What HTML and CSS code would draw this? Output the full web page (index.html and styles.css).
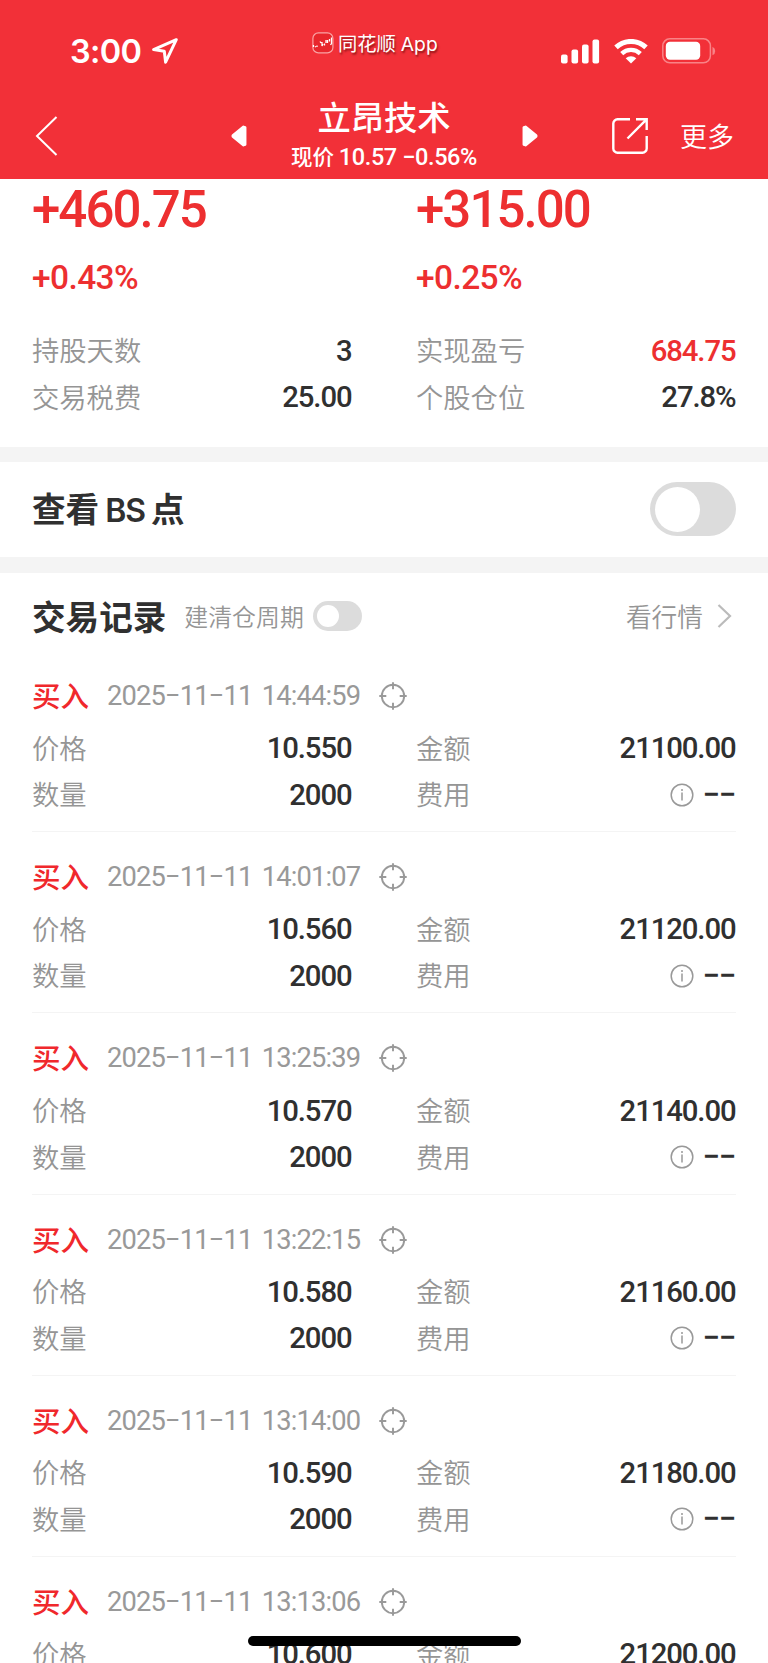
FILE: index.html
```html
<!DOCTYPE html>
<html lang="zh-CN">
<head>
<meta charset="utf-8">
<title>立昂技术</title>
<link rel="stylesheet" href="styles.css">
</head>
<body>
<svg width="0" height="0" class="defs">
  <symbol id="target" viewBox="0 0 28 28"><g fill="none" stroke="#999" stroke-width="1.900"><circle cx="14" cy="14" r="11.2"/><path d="M14 0.3v7M14 20.7v7M0.3 14h7M20.7 14h7"/></g></symbol>
  <symbol id="info" viewBox="0 0 24 24"><circle cx="12" cy="12" r="10.8" fill="none" stroke="#999" stroke-width="1.500"/><path d="M12 9.5v8" stroke="#999" stroke-width="1.500"/><circle cx="12" cy="7" r="1" fill="#999"/></symbol>
</svg>
<header class="header">
  <div class="status">
    <div class="clock"><span class="time">3:00</span>
      <svg class="loc" width="28" height="28" viewBox="0 0 28 28"><path d="M25.3 2.7 2.6 12.6 13.3 14.3 14.6 25.2Z" fill="none" stroke="#fff" stroke-width="3" stroke-linejoin="round"/></svg>
    </div>
    <div class="app">
      <svg width="22" height="22" viewBox="0 0 22 22"><rect x=".9" y=".9" width="20" height="20" rx="5.5" fill="#e8262c" stroke="#f9a3a4" stroke-width="1.2"/><path d="M1.5 13v2M3 14.5l1 .5M5 13.5v1.5M8 9.5l1 1.5M10 10v4l1-2M12.5 11.5v2M14 8v3M15.500 8v3M17.500 7v2.500M19.500 5.500v6l-1 1.500" fill="none" stroke="#fff" stroke-width="1.3"/></svg>
      <span>同花顺 App</span>
    </div>
    <div class="sys">
      <svg width="39" height="25" viewBox="0 0 39 25" fill="#fff"><rect x="0" y="15.500" width="6.600" height="9" rx="2"/><rect x="10.500" y="10.500" width="6.600" height="14" rx="2"/><rect x="21" y="5.500" width="6.600" height="19" rx="2"/><rect x="31.500" y=".5" width="6.600" height="24" rx="2"/></svg>
      <svg class="wifi" width="34" height="25" viewBox="0 0 34 25"><g fill="none" stroke="#fff"><path d="M2 8.400a21.800 21.800 0 0 1 30 0" stroke-width="5"/><path d="M7.700 14.600a13.500 13.500 0 0 1 18.600 0" stroke-width="4.400"/></g><path d="M17 24.600 11.700 19.200a8 8 0 0 1 10.600 0Z" fill="#fff"/></svg>
      <svg class="battery" width="55" height="26" viewBox="0 0 55 26"><rect x=".8" y=".8" width="47.600" height="24" rx="7" fill="none" stroke="#f98387" stroke-width="1.500"/><rect x="3.800" y="3.800" width="34.400" height="18" rx="4.200" fill="#fff"/><path d="M50.500 8.800a4.600 4.600 0 0 1 0 8.400Z" fill="#f98387"/></svg>
    </div>
  </div>
  <nav class="nav">
    <svg class="back" width="24" height="42" viewBox="0 0 24 42"><path d="M21.500 2 2 21 21.500 40" fill="none" stroke="#fff" stroke-width="2"/></svg>
    <svg width="16" height="22" viewBox="0 0 16 22"><path d="M12.500 1.800 1.800 10.500 1.800 11.500 12.500 20.200 14.200 19.500V2.500Z" fill="#fff" stroke="#fff" stroke-width="2.500" stroke-linejoin="round"/></svg>
    <div class="titles">
      <h1 class="title">立昂技术</h1>
      <div class="quote"><span>现价</span> <span class="quote-num">10.57 −0.56%</span></div>
    </div>
    <svg width="16" height="22" viewBox="0 0 16 22"><path d="M3.500 1.800 14.200 10.500 14.200 11.500 3.500 20.200 1.800 19.500V2.500Z" fill="#fff" stroke="#fff" stroke-width="2.500" stroke-linejoin="round"/></svg>
    <svg class="share" width="36" height="36" viewBox="0 0 36 36"><g fill="none" stroke="#fff" stroke-width="2.400"><path d="M18 1.300H5.500a4.200 4.200 0 0 0-4.200 4.200v25a4.200 4.200 0 0 0 4.200 4.200h25a4.200 4.200 0 0 0 4.200-4.200V18"/><path d="M24 1.300h10.700V12M34.300 1.700 15.500 20.500"/></g></svg>
    <span class="more">更多</span>
  </nav>
</header>
<main>
  <section class="summary">
    <div class="col">
      <div class="big">+460.75</div><div class="pct">+0.43%</div>
      <div class="row"><span class="label">持股天数</span><span class="num">3</span></div>
      <div class="row"><span class="label">交易税费</span><span class="num">25.00</span></div>
    </div>
    <div class="col">
      <div class="big">+315.00</div><div class="pct">+0.25%</div>
      <div class="row"><span class="label">实现盈亏</span><span class="num red">684.75</span></div>
      <div class="row"><span class="label">个股仓位</span><span class="num">27.8%</span></div>
    </div>
  </section>
  <section class="bs"><h2 class="heading">查看<span class="latin">BS</span>点</h2><span class="switch"></span></section>
  <section class="trades">
    <div class="trades-head"><h2 class="heading">交易记录</h2><span class="cycle">建清仓周期</span><span class="switch small"></span>
      <span class="market">看行情</span><svg width="15" height="26" viewBox="0 0 15 26"><path d="M1.500 2 13 13 1.500 24" fill="none" stroke="#bbb" stroke-width="2.200"/></svg></div>
    <div id="list"></div>
  </section>
</main>
<div class="home"></div>
<script src="app.js"></script>
</body>
</html>
```
FILE: styles.css
```css
* { box-sizing: border-box; }
html { height: 1663px; overflow: hidden; }
body {
  position: relative; margin: 0; width: 768px; height: 1663px; overflow: hidden;
  background: #fff; color: #303030;
  font-family: "Noto Sans CJK SC", sans-serif;
}
svg { display: block; flex: none; }
.defs { position: absolute; }
h1, h2 { margin: 0; }
.header { height: 179.300px; background: #f23038; color: #fff; }
.status { display: grid; grid-template-columns: 242px 249px 1fr; height: 92px; padding-left: 70px; }
.clock { display: flex; align-items: center; height: 102px; }
.time { width: 81px; padding-top: 1px; font: 600 32.500px/40px Inter, sans-serif; letter-spacing: -0.700px; white-space: nowrap; }
.app { display: flex; align-items: center; height: 86px; gap: 4px; font: 400 19.300px/26px Inter, "Noto Sans CJK SC", sans-serif; word-spacing: -0.500px; text-shadow: 1px 2px 2px rgba(70, 0, 0, .6); white-space: nowrap; }
.app span { padding-top: 2px; }
.sys { display: flex; align-items: center; height: 102px; }
.wifi { margin-left: 14px; }
.battery { margin-left: 14px; }
.nav { display: grid; grid-template-columns: 195.500px 16px 275px 16px 1fr auto; align-items: center; height: 87px; padding: 0 34px 0 35px; }
.titles { padding-bottom: 5px; text-align: center; white-space: nowrap; }
.title { font-size: 33.300px; font-weight: 500; line-height: 46px; }
.quote { font-size: 21.500px; font-weight: 500; line-height: 34px; }
.quote-num { font-family: Roboto, sans-serif; font-size: 23.500px; letter-spacing: -0.400px; }
.share { margin-left: 74px; }
.more { font-size: 27px; font-weight: 350; }
.summary { display: grid; grid-template-columns: 319.500px 319.500px; column-gap: 64.500px; height: 267.700px; padding-left: 32px; }
.big, .pct { color: #ed2f30; font-family: Roboto, sans-serif; font-weight: 500; }
.big { height: 64px; font-size: 51px; line-height: 62px; letter-spacing: -1.950px; }
.pct { height: 84.200px; font-size: 33.500px; line-height: 69px; letter-spacing: -0.600px; }
.row { display: flex; align-items: center; height: 46.500px; }
.label { padding-bottom: 3px; font-size: 27.300px; font-weight: 350; color: #959595; }
.num { margin-left: auto; font: 500 29.300px/40px Roboto, sans-serif; letter-spacing: -1.100px; }
.red { color: #ed2f30; }
.bs { display: flex; align-items: center; justify-content: space-between; height: 126px; padding: 0 32px; border: solid #f4f4f4; border-width: 15px 0 16px; }
.heading { font-size: 33.600px; font-weight: 700; line-height: 48px; }
.latin { margin: 0 6px 0 6px; font-family: Inter, sans-serif; font-size: 32px; font-weight: 600; letter-spacing: -1px; }
.switch { width: 86px; height: 54px; padding: 4.500px; border-radius: 27px; background: #dcdcdc; }
.switch::before { content: ""; display: block; width: 45px; height: 45px; border-radius: 50%; background: #fff; }
.small { width: 49px; height: 30px; padding: 4px; margin-left: 9.500px; }
.small::before { width: 22px; height: 22px; }
.trades-head { display: flex; align-items: center; height: 78px; padding: 8px 36px 0 32px; }
.cycle { margin-left: 18px; font-size: 23.900px; font-weight: 350; color: #959595; }
.market { margin: 0 14px 0 auto; font-size: 25.700px; font-weight: 350; color: #959595; }
.trade { height: 181.200px; margin: 0 32px; padding-top: 16px; border-bottom: 1.500px solid #f4f4f4; }
.trade-head { display: flex; align-items: center; height: 58px; }
.side { width: 75px; padding-bottom: 3px; font-size: 28.500px; font-weight: 500; color: #f0282c; }
.when { width: 272px; font: 400 27.300px/40px Roboto, sans-serif; color: #999; white-space: nowrap; letter-spacing: -0.850px; word-spacing: 3.500px; }
.trade-body { display: grid; grid-template-columns: 319.500px 319.500px; column-gap: 64.500px; }
.info { margin-left: auto; margin-right: 9px; }
.none { margin: 0; font-size: 31px; letter-spacing: -1px; }
.home { position: absolute; left: 248px; top: 1636px; width: 273px; height: 10px; border-radius: 5px; background: #000; }
```
FILE: app.js
```js
const trades = [
  ["2025−11−11 14:44:59", "10.550", "21100.00"],
  ["2025−11−11 14:01:07", "10.560", "21120.00"],
  ["2025−11−11 13:25:39", "10.570", "21140.00"],
  ["2025−11−11 13:22:15", "10.580", "21160.00"],
  ["2025−11−11 13:14:00", "10.590", "21180.00"],
  ["2025−11−11 13:13:06", "10.600", "21200.00"],
];
document.getElementById("list").innerHTML = trades.map(([when, price, amount]) => `
  <article class="trade">
    <div class="trade-head"><span class="side">买入</span><span class="when">${when}</span><svg width="28" height="28"><use href="#target"/></svg></div>
    <div class="trade-body">
      <div class="row"><span class="label">价格</span><span class="num">${price}</span></div>
      <div class="row"><span class="label">金额</span><span class="num">${amount}</span></div>
      <div class="row"><span class="label">数量</span><span class="num">2000</span></div>
      <div class="row"><span class="label">费用</span><svg class="info" width="24" height="24"><use href="#info"/></svg><span class="num none">−−</span></div>
    </div>
  </article>`).join("");
```
